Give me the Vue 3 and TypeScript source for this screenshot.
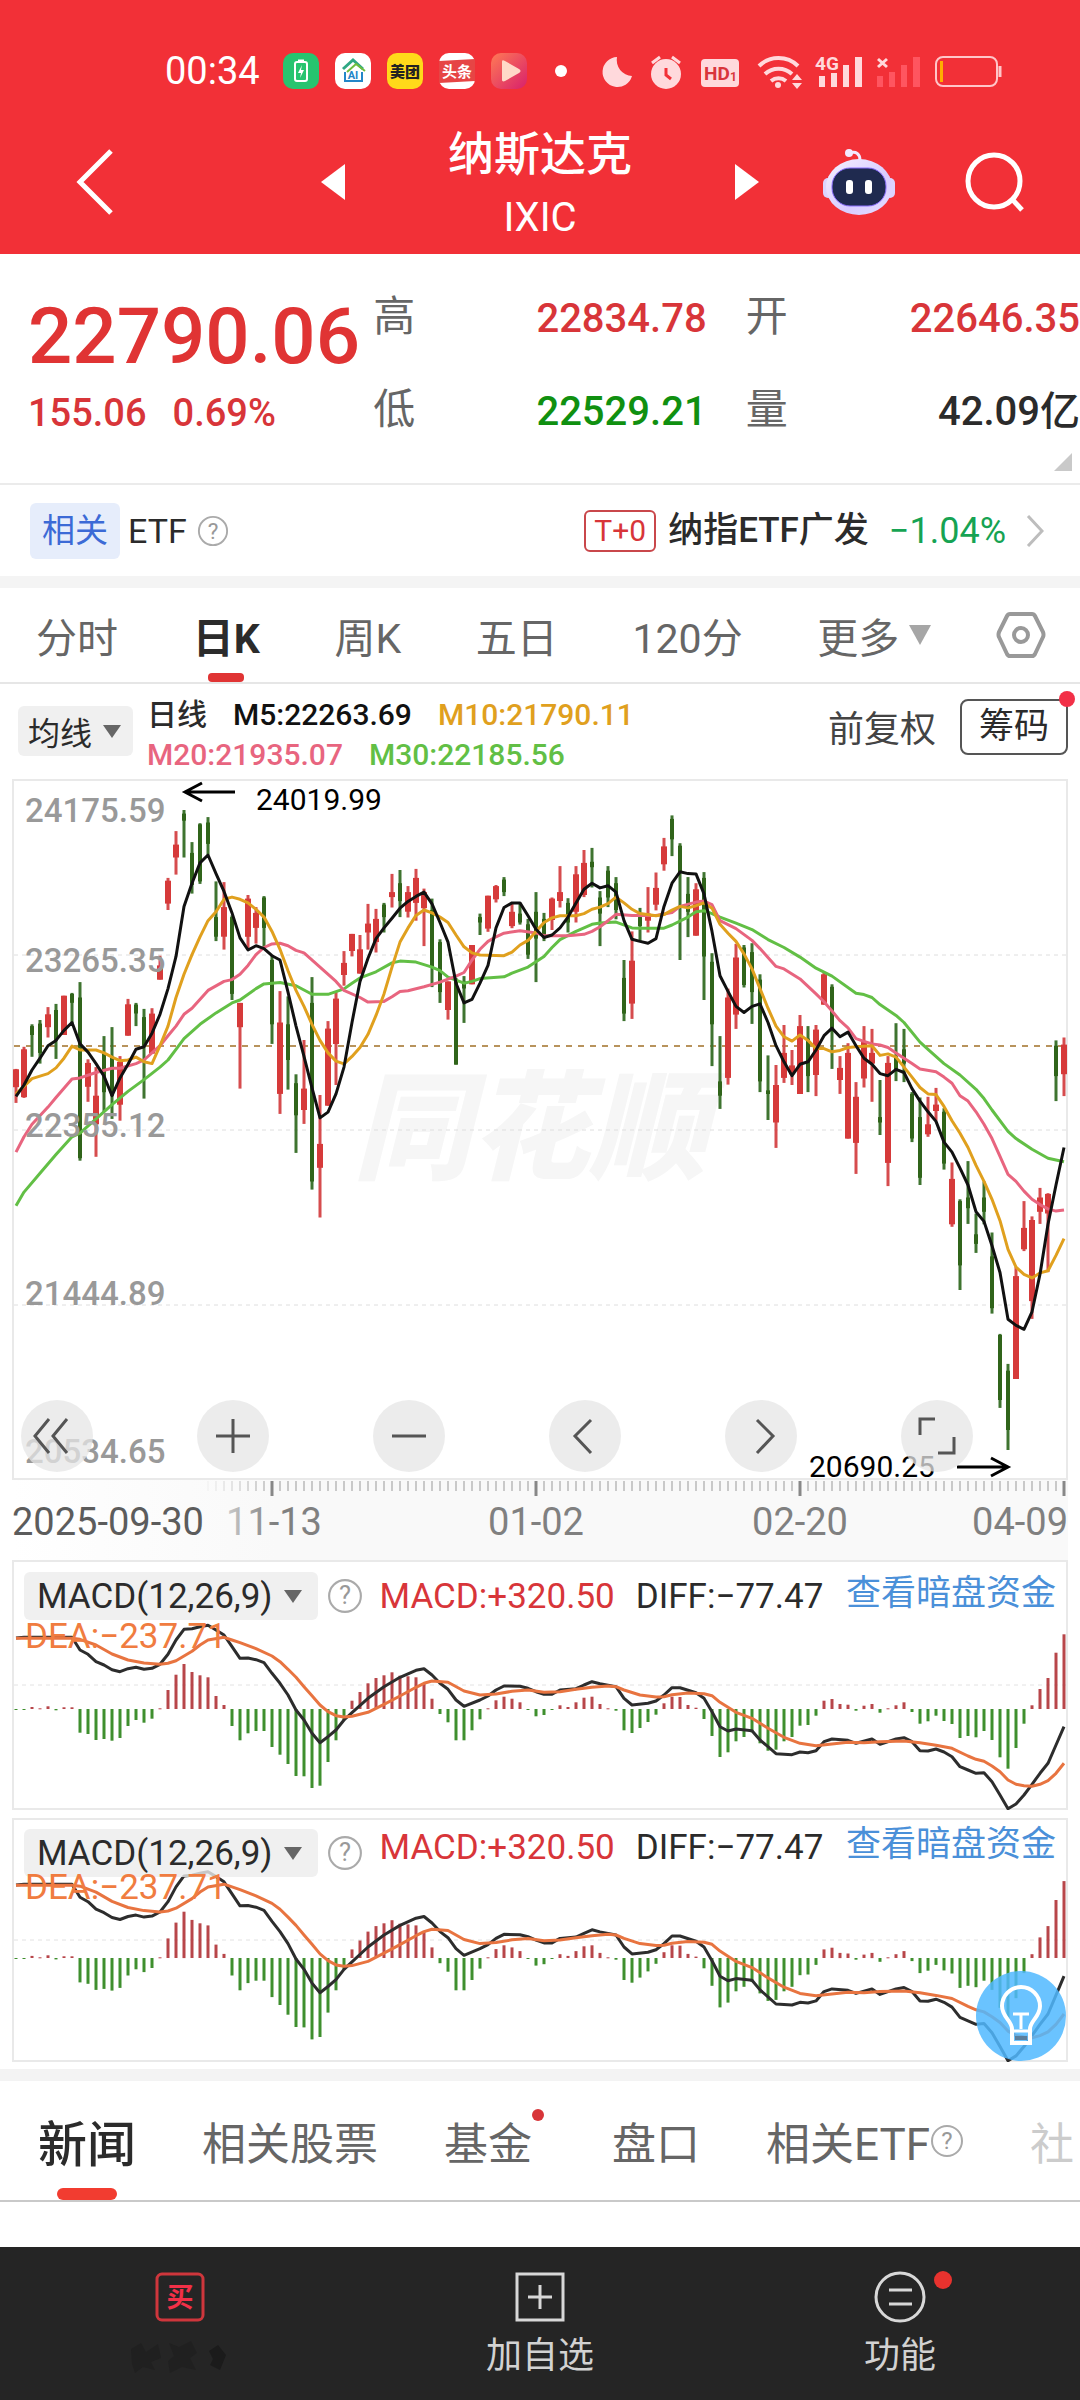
<script setup lang="ts">
import { ref } from 'vue'

type Candle = [up: number, high: number, top: number, bottom: number, low: number]
type Point = [index: number, value: number]

const STEP = 8
const xAt = (i: number): number => 4 + i * STEP
const round = (n: number): number => Math.round(n * 10) / 10

// Candle rows are depth values measured downwards: direction, high, body top, body bottom, low.
const candles: Candle[] = [
  [1, 865, 866, 916, 960], [1, 803, 810, 944, 946], [0, 740, 745, 770, 831], [0, 728, 738, 820, 850],
  [1, 692, 712, 748, 777], [0, 683, 700, 785, 837], [1, 660, 660, 770, 770], [0, 652, 655, 680, 737],
  [0, 622, 665, 1115, 1122], [1, 838, 848, 915, 957], [1, 860, 940, 1020, 1111], [0, 773, 820, 930, 985],
  [0, 748, 830, 940, 1005], [1, 829, 845, 965, 1010], [1, 669, 684, 772, 772], [0, 680, 685, 710, 745],
  [0, 697, 720, 800, 948], [1, 695, 710, 822, 822], [1, 548, 575, 615, 615], [1, 330, 338, 402, 420],
  [1, 199, 237, 273, 321], [0, 140, 150, 170, 273], [0, 230, 260, 350, 374], [0, 177, 180, 340, 347],
  [0, 160, 175, 235, 265], [0, 340, 440, 495, 507], [1, 342, 412, 495, 531], [0, 435, 440, 655, 672],
  [1, 680, 680, 748, 920], [1, 378, 388, 495, 528], [1, 412, 428, 470, 514], [0, 381, 385, 470, 525],
  [0, 548, 560, 740, 795], [1, 647, 735, 935, 991], [0, 662, 740, 840, 923], [0, 880, 905, 995, 1100],
  [1, 784, 920, 980, 1019], [0, 608, 680, 1180, 1203], [1, 938, 1075, 1142, 1281], [1, 731, 752, 968, 968],
  [1, 650, 668, 795, 910], [1, 535, 568, 602, 632], [1, 487, 487, 535, 550], [1, 490, 530, 598, 598],
  [1, 403, 458, 483, 531], [1, 417, 445, 510, 539], [0, 400, 405, 440, 483], [1, 319, 370, 384, 413],
  [0, 308, 345, 395, 440], [1, 353, 370, 425, 441], [1, 305, 330, 400, 450], [1, 360, 370, 415, 521],
  [0, 388, 420, 580, 636], [0, 502, 510, 650, 680], [1, 620, 620, 700, 727], [0, 610, 615, 853, 853],
  [0, 605, 620, 640, 736], [1, 518, 518, 628, 628], [0, 430, 440, 455, 490], [1, 380, 380, 472, 481],
  [1, 350, 353, 390, 399], [0, 328, 335, 370, 381], [1, 403, 425, 465, 471], [0, 403, 430, 455, 461],
  [0, 445, 460, 545, 557], [0, 370, 425, 500, 622], [0, 428, 445, 495, 507], [1, 385, 388, 448, 476],
  [1, 297, 370, 395, 413], [0, 387, 400, 455, 483], [1, 297, 320, 425, 455], [1, 252, 288, 378, 384],
  [0, 246, 285, 300, 357], [0, 367, 385, 430, 521], [0, 297, 310, 385, 412], [0, 328, 345, 420, 446],
  [0, 560, 610, 710, 731], [1, 480, 562, 682, 725], [0, 414, 440, 465, 508], [1, 356, 430, 450, 483],
  [1, 315, 358, 405, 421], [1, 218, 242, 292, 310], [0, 155, 165, 222, 269], [0, 233, 240, 315, 560],
  [0, 328, 375, 425, 496], [1, 345, 362, 492, 492], [0, 314, 330, 550, 672], [0, 541, 565, 740, 857],
  [0, 773, 900, 940, 977], [1, 640, 665, 890, 909], [1, 515, 553, 713, 753], [0, 518, 525, 630, 637],
  [0, 513, 538, 650, 739], [0, 600, 615, 900, 930], [0, 827, 925, 935, 1008], [1, 854, 910, 1015, 1086],
  [1, 742, 820, 890, 904], [1, 812, 855, 880, 910], [1, 714, 745, 935, 935], [0, 745, 780, 885, 930],
  [1, 742, 755, 882, 941], [1, 596, 600, 685, 685], [0, 628, 635, 760, 865], [1, 829, 862, 896, 935],
  [1, 793, 820, 1060, 1060], [1, 902, 943, 1072, 1159], [1, 745, 790, 892, 917], [1, 753, 820, 850, 957],
  [0, 896, 1000, 1015, 1050], [1, 829, 848, 1128, 1193], [0, 737, 830, 870, 899], [0, 753, 810, 850, 902],
  [0, 930, 935, 1060, 1070], [0, 945, 1000, 1170, 1190], [1, 943, 1020, 1048, 1055], [1, 918, 965, 983, 1010],
  [0, 975, 985, 1130, 1147], [1, 1127, 1173, 1300, 1307], [0, 1230, 1235, 1415, 1484], [0, 1123, 1225, 1255, 1299],
  [0, 1270, 1328, 1355, 1380], [0, 1180, 1225, 1265, 1300], [0, 1323, 1390, 1535, 1550], [0, 1607, 1610, 1792, 1814],
  [0, 1691, 1710, 1876, 1932], [1, 1420, 1445, 1733, 1733], [1, 1235, 1310, 1370, 1375], [1, 1278, 1288, 1515, 1565],
  [1, 1198, 1225, 1265, 1299], [1, 1213, 1215, 1270, 1434], [0, 785, 800, 885, 955], [1, 777, 797, 880, 941],
]

const ma5: number[] = [
  942, 910, 868, 835, 800, 785, 757, 735, 795, 818, 850, 885, 940, 890, 852, 810, 803, 765, 712, 640, 550, 410,
  345, 288, 266, 318, 368, 428, 498, 532, 520, 528, 548, 560, 650, 745, 830, 918, 1002, 986, 935, 860, 735, 620,
  555, 500, 470, 443, 415, 396, 382, 370, 403, 455, 510, 625, 680, 670, 625, 575, 470, 413, 400, 400, 436, 474,
  497, 490, 470, 440, 400, 362, 345, 358, 352, 370, 450, 502, 508, 513, 500, 410, 345, 313, 318, 319, 375, 480,
  604, 648, 690, 707, 690, 683, 735, 800, 845, 884, 852, 845, 812, 772, 751, 775, 762, 800, 835, 852, 878, 884,
  866, 875, 920, 955, 985, 1012, 1070, 1098, 1143, 1190, 1265, 1292, 1360, 1435, 1566, 1583, 1594, 1545, 1440,
  1300, 1190, 1085,
]
const ma10: Point[] = [
  [0, 935], [2, 892], [4, 878], [5, 862], [6, 835], [7, 801], [8, 812], [10, 812], [11, 820], [12, 832], [13, 842],
  [14, 840], [15, 832], [16, 845], [17, 850], [18, 800], [19, 745], [20, 665], [21, 600], [22, 545], [23, 495],
  [24, 450], [25, 425], [26, 390], [27, 384], [28, 390], [29, 400], [30, 418], [31, 440], [32, 480], [33, 530],
  [34, 590], [35, 645], [36, 690], [37, 740], [38, 785], [39, 820], [40, 843], [41, 851], [42, 830], [43, 805],
  [44, 768], [45, 715], [46, 655], [47, 580], [48, 510], [49, 470], [50, 435], [51, 420], [52, 428], [53, 440],
  [54, 455], [55, 490], [56, 523], [57, 540], [58, 546], [61, 548], [62, 538], [63, 518], [64, 505], [65, 480],
  [66, 455], [67, 442], [68, 436], [70, 436], [71, 430], [72, 418], [73, 412], [74, 402], [75, 384], [76, 400],
  [77, 418], [78, 430], [80, 436], [81, 433], [82, 420], [83, 410], [84, 414], [85, 408], [86, 400], [87, 415],
  [88, 460], [89, 485], [90, 508], [91, 543], [92, 585], [93, 640], [94, 695], [95, 745], [96, 775], [97, 787],
  [98, 770], [99, 785], [100, 808], [101, 808], [102, 817], [103, 813], [104, 805], [105, 803], [107, 800],
  [108, 827], [109, 823], [110, 832], [111, 860], [112, 888], [113, 917], [114, 935], [115, 937], [116, 970],
  [117, 1010], [118, 1045], [119, 1085], [120, 1135], [121, 1180], [122, 1230], [123, 1290], [124, 1370],
  [125, 1420], [126, 1440], [127, 1450], [128, 1436], [129, 1430], [130, 1387], [131, 1340],
]
const ma20: Point[] = [
  [0, 1098], [1, 1055], [2, 1020], [4, 972], [5, 945], [7, 893], [8, 890], [10, 875], [12, 863], [13, 863],
  [15, 850], [16, 840], [18, 800], [19, 772], [20, 745], [21, 712], [22, 695], [24, 645], [26, 620], [27, 615],
  [28, 600], [29, 575], [30, 545], [31, 525], [32, 515], [33, 513], [34, 520], [35, 533], [36, 540], [38, 580],
  [40, 620], [41, 645], [43, 665], [44, 678], [46, 676], [47, 663], [48, 648], [49, 646], [51, 635], [53, 622],
  [55, 605], [56, 595], [57, 560], [58, 530], [59, 508], [60, 495], [61, 485], [63, 478], [65, 484], [66, 492],
  [69, 492], [71, 488], [72, 480], [73, 467], [74, 450], [75, 432], [77, 435], [80, 435], [82, 427], [83, 410],
  [85, 398], [86, 395], [87, 405], [88, 450], [90, 472], [92, 505], [93, 528], [94, 553], [95, 578], [96, 585],
  [98, 613], [100, 655], [101, 677], [102, 703], [103, 730], [104, 750], [105, 780], [106, 788], [107, 795],
  [108, 798], [109, 805], [110, 820], [112, 850], [113, 865], [115, 873], [116, 888], [117, 905], [118, 940],
  [119, 955], [120, 985], [121, 1020], [122, 1060], [123, 1110], [124, 1160], [125, 1180], [126, 1207],
  [127, 1230], [128, 1245], [129, 1257], [130, 1263], [131, 1260],
]
const ma30: Point[] = [
  [0, 1248], [1, 1210], [3, 1157], [5, 1105], [7, 1055], [8, 1045], [10, 1005], [12, 965], [14, 928], [16, 895],
  [18, 860], [19, 840], [20, 810], [21, 780], [23, 740], [25, 708], [27, 680], [28, 672], [30, 640], [31, 627],
  [33, 623], [35, 632], [37, 656], [39, 656], [41, 641], [42, 625], [43, 610], [45, 593], [47, 568], [48, 563],
  [50, 566], [52, 580], [53, 590], [54, 608], [56, 625], [57, 620], [58, 612], [61, 607], [62, 597], [64, 580],
  [66, 550], [67, 525], [68, 503], [70, 480], [72, 460], [73, 456], [75, 454], [77, 470], [78, 471], [81, 471],
  [82, 462], [84, 440], [85, 425], [86, 422], [87, 430], [88, 440], [90, 457], [92, 475], [94, 503], [96, 525],
  [98, 552], [100, 583], [102, 605], [105, 653], [106, 657], [107, 665], [108, 685], [110, 715], [111, 735],
  [113, 790], [114, 810], [116, 850], [118, 882], [120, 922], [121, 948], [122, 980], [124, 1040], [125, 1060],
  [127, 1090], [129, 1115], [131, 1125],
]

const priceY = (v: number): number => round(v / 2.8 - 18)
const pricePath = (pts: Point[]): string => pts.map(([i, v]) => `${xAt(i)},${priceY(v)}`).join(' ')
const averages = [
  { color: '#62bf45', points: pricePath(ma30) },
  { color: '#e8657f', points: pricePath(ma20) },
  { color: '#e0a01e', points: pricePath(ma10) },
  { color: '#111111', points: pricePath(ma5.map((v, i): Point => [i, v])) },
]
const bars = candles.map(([up, high, top, bottom, low], i) => ({
  x: xAt(i),
  up: up === 1,
  high: priceY(high),
  low: priceY(low),
  top: priceY(top),
  height: round((bottom - top) / 2.8),
}))

const histogram: number[] = [
  -2, -2, 6, 2, 8, -4, 5, 5, -71, -75, -93, -90, -95, -87, -51, -33, -41, -29, 2, 57, 103, 135, 111, 101, 95, 39,
  12, -51, -94, -73, -66, -66, -114, -137, -165, -201, -202, -237, -230, -159, -94, -34, 25, 51, 77, 93, 101, 110,
  100, 98, 95, 78, 31, -15, -40, -94, -94, -64, -31, 2, 26, 37, 31, 20, -3, -22, -18, -2, 11, 6, 20, 34, 37, 15,
  2, -5, -64, -72, -57, -39, -17, 17, 37, 36, 12, 4, -30, -81, -144, -130, -97, -84, -70, -103, -125, -122, -97,
  -84, -50, -48, -20, 25, 30, 15, 13, -5, 10, 15, -11, 2, 11, 20, -9, -44, -37, -20, -36, -45, -87, -81, -85,
  -66, -93, -145, -179, -117, -44, 11, 60, 93, 169, 224,
]
const diff: Point[] = [
  [0, 264], [1, 262], [7, 262], [8, 300], [9, 313], [10, 335], [11, 345], [12, 359], [13, 365], [14, 356],
  [15, 352], [16, 358], [17, 355], [18, 343], [19, 313], [20, 270], [21, 238], [22, 236], [23, 230], [24, 226],
  [25, 240], [26, 255], [27, 290], [28, 325], [29, 324], [30, 329], [31, 338], [32, 370], [33, 400], [34, 435],
  [35, 480], [36, 510], [37, 550], [38, 578], [39, 560], [40, 540], [41, 510], [42, 488], [44, 445], [46, 410],
  [48, 382], [50, 361], [51, 356], [52, 375], [53, 400], [54, 418], [55, 450], [56, 469], [58, 450], [59, 438],
  [60, 420], [61, 408], [63, 409], [64, 415], [65, 425], [66, 433], [67, 433], [68, 420], [70, 416], [71, 405],
  [72, 395], [73, 401], [75, 410], [76, 445], [77, 465], [79, 460], [80, 453], [81, 435], [82, 413], [83, 413],
  [85, 428], [86, 445], [87, 485], [88, 530], [89, 543], [90, 537], [92, 542], [93, 570], [94, 590], [95, 611],
  [97, 614], [98, 606], [99, 608], [100, 602], [101, 575], [102, 567], [104, 571], [105, 580], [107, 567],
  [108, 583], [110, 567], [111, 563], [112, 575], [113, 602], [114, 603], [115, 597], [116, 606], [117, 620],
  [118, 650], [119, 660], [120, 670], [121, 668], [122, 695], [123, 735], [124, 776], [125, 762], [126, 735],
  [127, 703], [128, 670], [129, 640], [130, 585], [131, 530],
]
const dea: Point[] = [
  [0, 265], [7, 265], [8, 268], [10, 285], [12, 312], [14, 330], [16, 339], [18, 343], [19, 340], [20, 332],
  [22, 304], [23, 285], [24, 270], [26, 262], [27, 270], [28, 278], [30, 296], [32, 318], [33, 335], [34, 358],
  [35, 382], [36, 410], [37, 437], [38, 465], [39, 485], [40, 497], [41, 501], [42, 499], [44, 487], [46, 463],
  [48, 438], [50, 412], [51, 400], [52, 393], [54, 397], [56, 423], [58, 435], [60, 432], [62, 424], [64, 420],
  [66, 427], [68, 425], [70, 418], [72, 412], [74, 408], [75, 410], [76, 420], [78, 435], [80, 441], [81, 440],
  [82, 434], [84, 429], [86, 431], [87, 437], [88, 457], [90, 487], [92, 505], [94, 535], [96, 562], [98, 580],
  [100, 587], [102, 582], [104, 577], [106, 578], [108, 575], [111, 573], [113, 578], [115, 586], [117, 595],
  [119, 618], [120, 628], [121, 634], [122, 648], [123, 665], [124, 690], [125, 703], [126, 707], [127, 709],
  [128, 703], [129, 692], [130, 670], [131, 640],
]

const buildPanel = (id: string, height: number, zero: number, grid: number, scale: number) => {
  const line = (pts: Point[]): string =>
    pts.map(([i, v]) => `${xAt(i)},${round(zero + ((v - 477) * scale) / 3)}`).join(' ')
  return {
    id,
    height,
    grid,
    compact: height < 250,
    sticks: histogram.map((v, i) => ({
      x: xAt(i),
      up: v > 0,
      y: v > 0 ? round(zero - (v * scale) / 3) : zero,
      h: Math.max(1, round((Math.abs(v) * scale) / 3)),
    })),
    diff: line(diff),
    dea: line(dea),
  }
}
const panels = [buildPanel('upper', 250, 149, 125, 1), buildPanel('lower', 244, 140, 122, 1.03)]

const priceLabels = [
  { text: '24175.59', y: 44 },
  { text: '23265.35', y: 194 },
  { text: '22355.12', y: 359 },
  { text: '21444.89', y: 527 },
  { text: '20534.65', y: 685 },
]
const minorTicks = Array.from({ length: 108 }, (_, i) => 196 + i * 8)
const majorTicks = [260, 524, 788, 1052]

const periods = ['分时', '日K', '周K', '五日', '120分']
const activePeriod = ref('日K')
const newsTabs = ['新闻', '相关股票', '基金', '盘口', '相关ETF', '社']
const activeNews = ref('新闻')
const controls = [
  { label: '收起', d: 'M28 19 L14 36 L28 53 M46 19 L32 36 L46 53' },
  { label: '放大', d: 'M36 19 V53 M19 36 H53' },
  { label: '缩小', d: 'M19 36 H53' },
  { label: '左移', d: 'M42 20 L26 36 L42 53' },
  { label: '右移', d: 'M32 20 L48 36 L32 53' },
  { label: '全屏', d: 'M19 35 V19 H34 M53 37 V53 H37' },
]
</script>

<template>
  <div class="app">
    <header class="top">
      <div class="status">
        <time class="clock">00:34</time>
        <svg class="tile" viewBox="0 0 36 36"><rect width="36" height="36" rx="10" fill="#27c46f" /><rect x="12" y="9" width="12" height="19" rx="2" fill="none" stroke="#fff" stroke-width="2" /><path d="M15 8h6" stroke="#fff" stroke-width="3" /><path d="M19 12l-4 8h3l-1 5 4-8h-3z" fill="#fff" /></svg>
        <svg class="tile" viewBox="0 0 36 36"><rect width="36" height="36" rx="10" fill="#fff" /><path d="M8 16L18 7l10 9" fill="none" stroke="#2fa884" stroke-width="3" /><path d="M12 19L21 11l9 7" fill="none" stroke="#6fbd3c" stroke-width="2" /><path d="M10 19v9h17v-9" fill="none" stroke="#2386c8" stroke-width="2" /><text x="18" y="26" text-anchor="middle" font-size="11" font-weight="700" fill="#2386c8">AI</text></svg>
        <svg class="tile" viewBox="0 0 36 36"><rect width="36" height="36" rx="10" fill="#ffd91a" /><text x="18" y="24" text-anchor="middle" font-size="15" font-weight="900" fill="#222">美团</text></svg>
        <svg class="tile" viewBox="0 0 36 36"><rect width="36" height="36" rx="10" fill="#fff" /><path d="M0 8l36-2v22l-36 2z" fill="#e64545" /><text x="18" y="24" text-anchor="middle" font-size="15" font-weight="700" fill="#fff">头条</text></svg>
        <svg class="tile" viewBox="0 0 36 36"><defs><linearGradient id="play" x1="0" y1="0" x2="1" y2="1"><stop offset="0" stop-color="#ff7a55" /><stop offset="1" stop-color="#d8206c" /></linearGradient></defs><rect width="36" height="36" rx="10" fill="url(#play)" /><path d="M11 9c0-2 1-2 3-1l14 8c2 1 2 3 0 4l-14 8c-2 1-3 0-3-1z" fill="#ffd9c8" /></svg>
        <i class="more-dot"></i>
        <svg class="sys" width="404" height="40" viewBox="600 50 404 40" fill="#ffd9dc">
          <path d="M617 56A15 15 0 1 0 632 75A16 16 0 0 1 617 56z" />
          <circle cx="666" cy="73" r="15" /><path d="M652 62l8-6M672 56l8 6" stroke="#ffd9dc" stroke-width="3" /><path d="M666 67v7l5 4" fill="none" stroke="#f23037" stroke-width="3" />
          <rect x="701" y="58" width="38" height="28" rx="4" /><text x="704" y="79" font-size="19" font-weight="700" fill="#d9363c">HD</text><text x="730" y="80" font-size="12" font-weight="700" fill="#d9363c">1</text>
          <g fill="none" stroke="#ffd9dc" stroke-width="4"><path d="M759 65a28 28 0 0 1 39 0M765 73a20 20 0 0 1 27 0M771 80a12 12 0 0 1 15 0" /></g><circle cx="778" cy="84" r="3" /><path d="M797 73l5 6h-10zM797 88l5-6h-10z" />
          <text x="815" y="69" font-size="19" font-weight="700">4G</text><rect x="819" y="75" width="6" height="11" /><rect x="831" y="72" width="6" height="14" /><rect x="843" y="64" width="6" height="22" /><rect x="855" y="56" width="7" height="30" />
          <path d="M878 58l9 8M887 58l-9 8" stroke="#ffd9dc" stroke-width="3" /><g fill="#ff5560"><rect x="877" y="75" width="6" height="11" /><rect x="889" y="71" width="6" height="15" /><rect x="901" y="64" width="6" height="22" /><rect x="913" y="56" width="7" height="30" /></g>
          <rect x="936" y="56" width="61" height="29" rx="7" fill="none" stroke="#ffc6c9" stroke-width="2" /><path d="M1000 65v11" stroke="#ffc6c9" stroke-width="3" /><rect x="940" y="60" width="3" height="21" fill="#ffae00" />
        </svg>
      </div>
      <div class="title-bar">
        <button class="back" aria-label="返回"><svg width="38" height="66" viewBox="0 0 38 66" fill="none" stroke="#fff" stroke-width="5"><path d="M35 2L4 33l31 31" /></svg></button>
        <div class="switcher">
          <button aria-label="上一只"><svg width="24" height="36" viewBox="0 0 24 36"><path d="M24 0v36L0 18z" fill="#fff" /></svg></button>
          <h1>纳斯达克<small>IXIC</small></h1>
          <button aria-label="下一只"><svg width="24" height="36" viewBox="0 0 24 36"><path d="M0 0v36l24-18z" fill="#fff" /></svg></button>
        </div>
        <div class="actions">
          <button aria-label="助手">
            <svg width="72" height="66" viewBox="0 0 72 66">
              <defs><linearGradient id="shell" x1="0" y1="0" x2="1" y2="1"><stop offset="0" stop-color="#f6f1ff" /><stop offset="0.6" stop-color="#d8ccff" /><stop offset="1" stop-color="#e6ddff" /></linearGradient></defs>
              <path d="M27 4c6-2 10 1 10 7" fill="none" stroke="#f3e8ff" stroke-width="3" /><circle cx="26" cy="4" r="4" fill="#f3e8ff" />
              <rect x="0" y="29" width="10" height="20" rx="5" fill="#dcd4ff" /><rect x="62" y="29" width="10" height="20" rx="5" fill="#dcd4ff" />
              <ellipse cx="36" cy="38" rx="33" ry="28" fill="url(#shell)" /><rect x="9" y="19" width="54" height="38" rx="18" fill="#1f2a4f" stroke="#8b6fff" stroke-width="1" />
              <rect x="23" y="31" width="7" height="14" rx="3" fill="#fff" /><rect x="42" y="31" width="7" height="14" rx="3" fill="#fff" />
            </svg>
          </button>
          <button aria-label="搜索"><svg width="60" height="60" viewBox="0 0 60 60" fill="none" stroke="#fff" stroke-width="5"><circle cx="30" cy="29" r="26" /><path d="M48 47l10 11" /></svg></button>
        </div>
      </div>
    </header>

    <section class="quote">
      <div class="price">
        <strong>22790.06</strong>
        <p><span>155.06</span><span>0.69%</span></p>
      </div>
      <dl>
        <div><dt>高</dt><dd class="red">22834.78</dd></div>
        <div><dt>低</dt><dd class="green">22529.21</dd></div>
      </dl>
      <dl>
        <div><dt>开</dt><dd class="red">22646.35</dd></div>
        <div><dt>量</dt><dd>42.09亿</dd></div>
      </dl>
      <i class="corner"></i>
    </section>

    <section class="etf">
      <span class="chip">相关</span>
      <span class="etf-name">ETF</span>
      <svg class="help" width="32" height="32" viewBox="0 0 34 34"><circle cx="17" cy="17" r="15" /><text x="17" y="25" text-anchor="middle">?</text></svg>
      <a href="#etf" class="fund">
        <span class="t0">T+0</span><b>纳指ETF广发</b><span class="drop">−1.04%</span>
        <svg width="18" height="32" viewBox="0 0 18 32" fill="none" stroke="#bdbdbd" stroke-width="3"><path d="M2 1l14 15L2 31" /></svg>
      </a>
    </section>

    <nav class="periods">
      <button v-for="p in periods" :key="p" :class="{ on: p === activePeriod }" @click="activePeriod = p">{{ p }}</button>
      <button class="more">更多<svg width="22" height="20" viewBox="0 0 22 20"><path d="M0 0h22L11 20z" fill="#a6a6a6" /></svg></button>
      <button aria-label="设置"><svg width="50" height="48" viewBox="0 0 50 48" fill="none" stroke="#999" stroke-width="4"><path d="M14 3h22q2 0 3 2l8 16q1 3 0 5l-8 17q-1 2-3 2H14q-2 0-3-2L3 26q-1-2 0-5l8-16q1-2 3-2z" /><circle cx="25" cy="24" r="7" /></svg></button>
    </nav>

    <section class="legend">
      <button class="pick">均线<svg width="18" height="13" viewBox="0 0 18 13"><path d="M0 0h18L9 13z" fill="#666" /></svg></button>
      <div class="ma">
        <p><span>日线</span><span class="m5">M5:22263.69</span><span class="m10">M10:21790.11</span></p>
        <p><span class="m20">M20:21935.07</span><span class="m30">M30:22185.56</span></p>
      </div>
      <button class="adjust">前复权</button>
      <button class="chips">筹码<i></i></button>
    </section>

    <section class="kline">
      <svg class="plot" viewBox="0 0 1056 702">
        <text x="518" y="392" text-anchor="middle" class="watermark">同花顺</text>
        <rect x="1" y="2" width="1054" height="699" fill="none" stroke="#e9e9e9" stroke-width="2" />
        <g stroke="#dedede" stroke-dasharray="4 4"><path d="M2 177H1054M2 352H1054M2 527H1054" /></g>
        <path d="M2 268H1054" stroke="#b8935c" stroke-width="2" stroke-dasharray="6 6" />
        <g v-for="b in bars" :key="b.x" :class="b.up ? 'rise' : 'fall'">
          <rect :x="b.x - 1.5" :y="b.high" width="3" :height="round(b.low - b.high)" class="wick" />
          <rect :x="b.up ? b.x - 3 : b.x - 2" :y="b.top" :width="b.up ? 6 : 4" :height="b.height" />
        </g>
        <polyline v-for="a in averages" :key="a.color" :points="a.points" fill="none" :stroke="a.color" stroke-width="3" stroke-linejoin="round" />
        <text v-for="l in priceLabels" :key="l.text" x="13" :y="l.y" class="scale">{{ l.text }}</text>
        <g fill="none" stroke="#000" stroke-width="3"><path d="M223 14H173M190 5L173 14l17 9" /><path d="M945 689h50M979 680l17 9-17 9" /></g>
        <text x="244" y="32" class="extreme">24019.99</text>
        <text x="797" y="699" class="extreme">20690.25</text>
      </svg>
      <div class="controls">
        <button v-for="c in controls" :key="c.label" :aria-label="c.label">
          <svg width="72" height="72" viewBox="0 0 72 72" fill="none" stroke="#555" stroke-width="3"><path :d="c.d" /></svg>
        </button>
      </div>
    </section>

    <svg class="axis" viewBox="0 0 1056 80">
      <defs>
        <linearGradient id="haze"><stop offset="0" stop-color="#fff" /><stop offset="0.25" stop-color="#f9f9f9" /></linearGradient>
        <linearGradient id="fade"><stop offset="0" stop-color="#ccc" /><stop offset="0.5" stop-color="#808080" /></linearGradient>
      </defs>
      <rect width="1056" height="80" fill="url(#haze)" />
      <path v-for="(t, i) in minorTicks" :key="t" :d="`M${t} 1v10`" stroke="#999" stroke-width="1" :opacity="Math.min(1, (i + 1) / 9)" />
      <path v-for="t in majorTicks" :key="t" :d="`M${t} 1v15`" stroke="#888" stroke-width="3" />
      <g class="dates">
        <text x="0" y="55" fill="#5c5c5c">2025-09-30</text>
        <text x="262" y="55" text-anchor="middle" fill="url(#fade)">11-13</text>
        <text x="524" y="55" text-anchor="middle">01-02</text>
        <text x="788" y="55" text-anchor="middle">02-20</text>
        <text x="1056" y="55" text-anchor="end">04-09</text>
      </g>
    </svg>

    <section v-for="p in panels" :key="p.id" class="macd" :class="{ compact: p.compact }">
      <svg class="plot" :viewBox="`0 0 1056 ${p.height}`">
        <rect x="1" y="1" width="1054" :height="p.height - 2" fill="none" stroke="#e9e9e9" stroke-width="2" />
        <path :d="`M2 ${p.grid}H1054`" stroke="#e2e2e2" stroke-dasharray="4 4" />
        <rect v-for="s in p.sticks" :key="s.x" :x="s.x - 1.5" :y="s.y" width="3" :height="s.h" :fill="s.up ? '#b8464a' : '#3f8f2e'" />
        <g fill="none" stroke-width="3" stroke-linejoin="round"><polyline :points="p.diff" stroke="#2d2d2d" /><polyline :points="p.dea" stroke="#e87440" /></g>
      </svg>
      <div class="readout">
        <div class="line">
          <button class="pick">MACD(12,26,9)<svg width="18" height="13" viewBox="0 0 18 13"><path d="M0 0h18L9 13z" fill="#666" /></svg></button>
          <svg class="help" width="36" height="36" viewBox="0 0 34 34"><circle cx="17" cy="17" r="15" /><text x="17" y="25" text-anchor="middle">?</text></svg>
          <span class="red">MACD:+320.50</span>
          <span>DIFF:−77.47</span>
          <a href="#fund-flow">查看暗盘资金</a>
        </div>
        <div class="dea">DEA:−237.71</div>
      </div>
      <button v-if="p.compact" class="lamp" aria-label="提示">
        <svg width="90" height="90" viewBox="0 0 90 90" fill="none" stroke="#fff" stroke-width="4"><path d="M36 58c0-8-10-12-10-23a19 19 0 0 1 38 0c0 11-10 15-10 23v14H36z" /><path d="M37 43h16M45 43v15M36 60h18" stroke-width="3" /><path d="M39 67h12" stroke="#5c7f9c" /></svg>
      </button>
    </section>

    <nav class="news">
      <button v-for="t in newsTabs" :key="t" :class="{ on: t === activeNews, badge: t === '基金', tail: t === '社' }" @click="activeNews = t">
        {{ t }}<svg v-if="t === '相关ETF'" class="help" width="34" height="34" viewBox="0 0 34 34"><circle cx="17" cy="17" r="15" /><text x="17" y="25" text-anchor="middle">?</text></svg>
      </button>
    </nav>
    <div class="feed"></div>

    <footer class="dock">
      <button aria-label="买">
        <svg width="52" height="52" viewBox="0 0 52 52"><rect x="3" y="3" width="46" height="46" rx="5" fill="none" stroke="#cf363c" stroke-width="3" /><text x="26" y="36" text-anchor="middle" font-size="27" font-weight="700" fill="#f23047">买</text></svg>
        <svg width="110" height="50" viewBox="0 0 110 50" fill="#202020"><path d="M6 18l10-6 5 9 12-8 3 14-10 4 4 8-12-3-8 6-3-9zM44 12l10 4 12-6 6 12-7 5 6 12-14-3-12 6-2-12 6-5z" /><path d="M84 20l9-6 8 10-6 15-10-5 3-6z" fill="#1b1b1b" /></svg>
      </button>
      <button>
        <svg width="52" height="52" viewBox="0 0 52 52" fill="none" stroke="#d8d8d8" stroke-width="3"><rect x="3" y="3" width="46" height="46" /><path d="M26 14v24M14 26h24" /></svg>
        <span>加自选</span>
      </button>
      <button>
        <svg width="52" height="52" viewBox="0 0 52 52" fill="none" stroke="#d8d8d8" stroke-width="3"><circle cx="26" cy="26" r="24" /><path d="M15 19h23M15 33h23" /></svg>
        <span>功能</span><i></i>
      </button>
    </footer>
  </div>
</template>

<style>
body { background: #fff; }
</style>

<style scoped>
.app { font-family: Roboto, "Noto Sans CJK SC", sans-serif; color: #2b2b2b; background: #fff; overflow: hidden; min-height: 100vh; display: flex; flex-direction: column; }
.app * { box-sizing: border-box; }
button { border: 0; background: none; padding: 0; margin: 0; font: inherit; color: inherit; }
a { color: inherit; text-decoration: none; }
svg { display: block; flex: none; }
p, dl, dd, h1 { margin: 0; }
.red { color: #d83539; }
.green { color: #109010; }

.top { background: #f23037; color: #fff; }
.status { display: flex; align-items: center; height: 110px; padding: 32px 0 0 165px; }
.clock { font-size: 38px; line-height: 40px; width: 118px; }
.tile { width: 36px; height: 36px; margin-right: 16px; }
.more-dot { width: 12px; height: 12px; border-radius: 50%; background: #fff; margin: 0 33px 0 12px; }
.title-bar { display: grid; grid-template-columns: 1fr auto 1fr; align-items: center; height: 144px; padding: 0 56px; }
.back { justify-self: start; margin-left: 20px; }
.switcher { display: flex; align-items: center; justify-content: space-between; width: 438px; }
.switcher h1 { padding-top: 8px; font-size: 46px; line-height: 64px; font-weight: 500; text-align: center; }
.switcher small { display: block; font-size: 40px; line-height: 64px; font-weight: 400; }
.actions { display: flex; align-items: center; justify-content: flex-end; gap: 69px; }

.quote { position: relative; display: grid; grid-template-columns: minmax(0, 306fr) minmax(0, 333fr) minmax(0, 334fr); column-gap: 39px; padding: 18px 0 0 28px; height: 231px; border-bottom: 2px solid #ebebeb; }
.price { padding-top: 14px; color: #e03434; white-space: nowrap; }
.price strong { display: block; font-size: 78px; line-height: 102px; font-weight: 500; }
.price p { display: flex; gap: 26px; font-size: 38px; line-height: 50px; font-weight: 500; color: #d83539; }
.quote dl div { display: flex; justify-content: space-between; align-items: center; height: 93px; white-space: nowrap; }
.quote dt { font-size: 42px; line-height: 56px; padding-bottom: 4px; color: #666; }
.quote dd { font-size: 40px; line-height: 56px; font-weight: 500; }
.corner { position: absolute; right: 8px; bottom: 12px; border: solid transparent; border-width: 0 0 18px 18px; border-bottom-color: #c9c9c9; }

.etf { display: flex; align-items: center; height: 91px; padding: 0 36px 0 30px; }
.chip { padding: 4px 12px; font-size: 33px; line-height: 48px; border-radius: 6px; background: #e6edfb; color: #3c6ad6; }
.etf-name { margin: 0 10px 0 8px; font-size: 34px; }
.help circle { fill: none; stroke: #aaa; stroke-width: 2; }
.help text { font-size: 24px; fill: #999; }
.fund { display: flex; align-items: center; margin-left: auto; font-size: 36px; line-height: 48px; }
.t0 { border: 2px solid #c9474b; border-radius: 6px; padding: 0 8px; font-size: 30px; line-height: 38px; color: #d83539; }
.fund b { font-weight: 500; font-size: 35px; margin: 0 20px 0 12px; }
.drop { color: #16a353; margin-right: 20px; }

.periods { display: flex; align-items: center; justify-content: space-between; height: 108px; border-top: 12px solid #f4f4f4; border-bottom: 2px solid #e6e6e6; padding: 0 34px 0 36px; font-size: 41px; color: #666; }
.periods button { position: relative; height: 94px; }
.periods .on { color: #2b2b2b; font-weight: 700; }
.periods .on::after { content: ""; position: absolute; left: 50%; bottom: 0; width: 36px; height: 9px; margin-left: -18px; border-radius: 4px; background: #e03434; }
.periods .more { display: flex; align-items: center; gap: 10px; margin-right: -10px; }

.legend { display: flex; align-items: center; height: 94px; padding: 0 12px 0 18px; }
.pick { display: flex; align-items: center; gap: 11px; height: 50px; padding: 0 12px 0 10px; border-radius: 6px; background: rgba(236, 236, 236, 0.8); font-size: 32px; }
.ma { margin-left: 14px; padding-top: 8px; font-size: 30px; line-height: 40px; font-weight: 500; white-space: nowrap; }
.ma p { display: flex; gap: 26px; }
.m5 { color: #111; }
.m10 { color: #e0a01e; }
.m20 { color: #e8657f; }
.m30 { color: #62bf45; }
.adjust { margin-left: auto; padding-bottom: 10px; font-size: 36px; color: #444; }
.chips { position: relative; margin: 0 0 8px 24px; width: 108px; height: 56px; border: 2px solid #555; border-radius: 8px; font-size: 35px; line-height: 50px; }
.chips i { position: absolute; right: -9px; top: -10px; width: 16px; height: 16px; border-radius: 50%; background: #f23047; }

.kline { position: relative; margin: 0 12px; }
.plot { width: 100%; height: auto; }
.rise { fill: #d63a3a; }
.rise .wick { fill: #d64c4e; }
.fall { fill: #30641a; }
.fall .wick { fill: #3f7430; }
.scale { font-size: 33px; font-weight: 500; fill: #999; }
.extreme { font-size: 30px; fill: #000; }
.watermark { font-size: 118px; font-weight: 900; font-style: italic; fill: #f6f6f6; }
.controls { position: absolute; left: 9px; right: 95px; bottom: 8px; display: flex; justify-content: space-between; }
.controls button { width: 72px; height: 72px; border-radius: 50%; background: rgba(229, 229, 229, 0.75); }
.axis { margin: 0 12px; }
.dates { font-size: 38px; fill: #808080; }

.macd { display: grid; margin: 0 12px 8px; position: relative; }
.macd.compact { margin-bottom: 7px; }
.macd > .plot, .readout { grid-area: 1 / 1; }
.readout { z-index: 1; padding: 12px 12px 0; font-size: 35px; white-space: nowrap; }
.line { display: flex; align-items: center; height: 48px; }
.line .pick { height: 48px; font-size: 35px; padding: 0 16px 0 13px; margin-right: 9px; }
.line .red { margin: 0 21px 0 17px; }
.line a { margin-left: auto; line-height: 48px; padding-bottom: 4px; color: #4a90d9; }
.dea { padding-left: 1px; line-height: 34px; color: #f07c40; }
.compact .readout { padding-top: 5px; }
.compact .pick, .compact .help { margin-top: 12px; }
.lamp { position: absolute; right: 2px; bottom: 1px; width: 90px; height: 90px; border-radius: 50%; background: rgba(80, 184, 255, 0.85); z-index: 2; }

.news { display: flex; align-items: center; gap: 66px; height: 133px; border-top: 12px solid #f3f3f3; border-bottom: 2px solid #c9c9c9; padding-left: 38px; font-size: 44px; color: #666; white-space: nowrap; }
.news button { position: relative; display: flex; align-items: center; flex: none; height: 119px; }
.news .on { font-size: 49px; font-weight: 500; color: #2b2b2b; }
.news .on::after { content: ""; position: absolute; left: 50%; bottom: 0; width: 60px; height: 12px; margin-left: -30px; border-radius: 6px; background: #f23c30; }
.news .badge { padding-right: 14px; }
.news .badge::after { content: ""; position: absolute; right: 2px; top: 28px; width: 12px; height: 12px; border-radius: 50%; background: #d83539; }
.news .tail { color: #ccc; }
.feed { flex: 1; }

.dock { display: grid; grid-template-columns: repeat(3, 1fr); height: 153px; background: #252525; color: #d2d2d2; font-size: 36px; }
.dock button { position: relative; display: flex; flex-direction: column; align-items: center; padding-top: 24px; gap: 8px; line-height: 50px; }
.dock i { position: absolute; left: 50%; top: 24px; width: 18px; height: 18px; margin-left: 34px; border-radius: 50%; background: #e8322e; }
</style>
